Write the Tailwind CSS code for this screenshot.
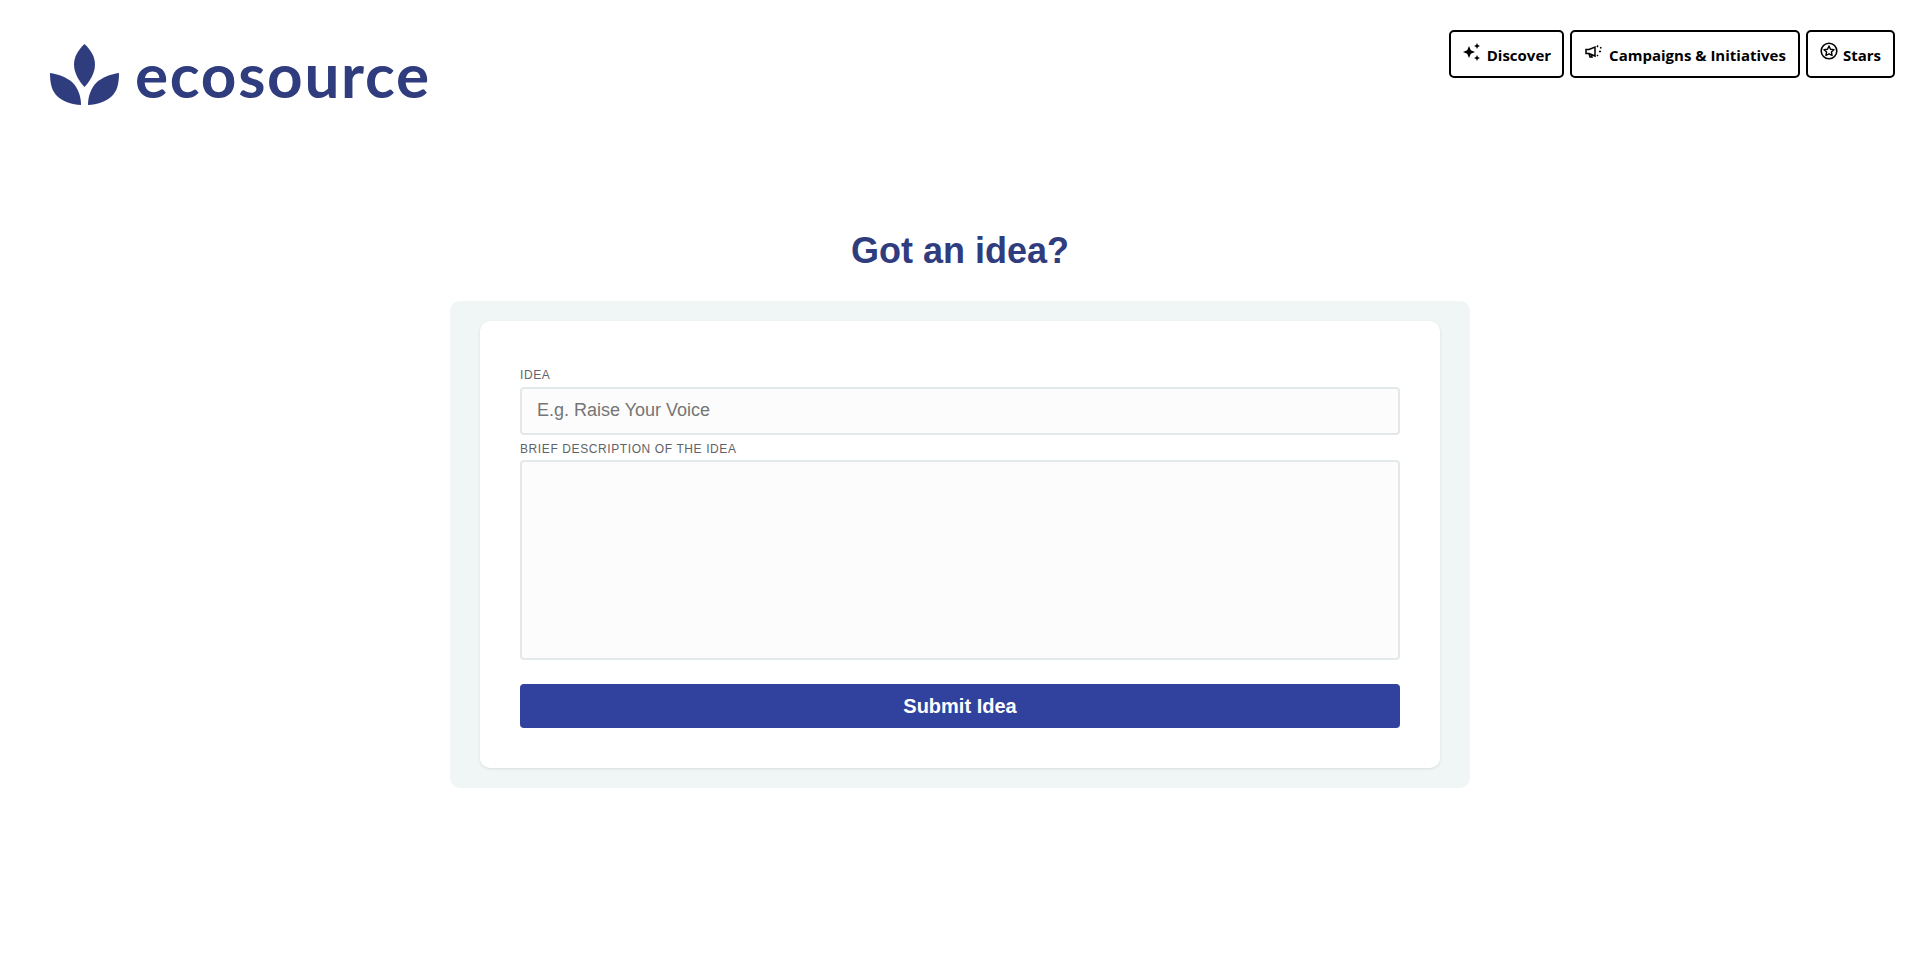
<!DOCTYPE html>
<html lang="en">
<head>
    <meta charset="UTF-8">
    <meta name="viewport" content="width=device-width, initial-scale=1.0">
    <title>Ecosource - Got an idea?</title>
    <script src="https://cdn.jsdelivr.net/npm/@tailwindcss/browser@4"></script>
</head>
<body class="bg-white font-['Liberation_Sans',sans-serif] h-[964px] overflow-hidden">
    <header class="flex justify-between items-start h-[222px]">
        <a href="#" class="flex items-center ml-[50px] mt-[44px] h-[62px] text-[#2f3c7e]">
            <svg width="70" height="62" viewBox="0 0 70 62" class="fill-[#2f3c7e]">
                <path d="M34.500 0C28 6 24 13 24 20.500C24 29 29 37 34.500 43C40 37 45 29 45 20.500C45 13 41 6 34.500 0Z"/>
                <path d="M0 29C0 40 2 47 7 52C13 58 22 60.500 31 61C31 52 28 44 22 38C16 33 8 30 0 29Z"/>
                <path d="M69 29C69 40 67 47 62 52C56 58 47 60.500 38 61C38 52 41 44 47 38C53 33 61 30 69 29Z"/>
            </svg>
            <span class="ml-[15px] font-['Lato',sans-serif] font-bold text-[62px] leading-none tracking-[1.7px] -mt-[2px]">ecosource</span>
        </a>
        <nav class="flex gap-[6px] mt-[30px] mr-[25px] font-['Open_Sans',sans-serif] font-bold text-[15px] text-black">
            <a href="#" class="flex items-center gap-[5px] h-[48px] pt-[2px] px-[11px] border-2 border-black rounded-[5px]">
                <svg width="20" height="20" viewBox="0 0 20 20" class="fill-black -mt-[6px]">
                    <path d="M7 4L8.800 8.200L13 10L8.800 11.800L7 16L5.200 11.800L1 10L5.200 8.200Z"/>
                    <path d="M15 1L15.900 3.100L18 4L15.900 4.900L15 7L14.100 4.900L12 4L14.100 3.100Z"/>
                    <path d="M15 13L15.900 15.100L18 16L15.900 16.900L15 19L14.100 16.900L12 16L14.100 15.100Z"/>
                </svg>
                Discover
            </a>
            <a href="#" class="flex items-center gap-[5px] h-[48px] pt-[2px] px-[12px] border-2 border-black rounded-[5px]">
                <svg width="20" height="20" viewBox="0 0 20 20" fill="none" stroke="black" stroke-width="1.500" class="-mt-[6px]">
                    <path d="M2 7.500V11.500H5L11 14V5L5 7.500Z"/>
                    <path d="M5 11.500L6 15H8L7.200 12.500"/>
                    <path d="M14 3.500L13 5M15 9.500H17M14 14L13 13M16 6L17.500 5.500"/>
                </svg>
                Campaigns &amp; Initiatives
            </a>
            <a href="#" class="flex items-center gap-[5px] h-[48px] pt-[2px] px-[12px] border-2 border-black rounded-[5px]">
                <svg width="18" height="18" viewBox="0 0 18 18" fill="none" stroke="black" class="-mt-[8px]">
                    <circle cx="9" cy="9" r="7.800" stroke-width="1.600"/>
                    <path stroke-width="1.400" stroke-linejoin="round" d="M9 4L10.500 7.300L14 7.700L11.400 10L12.100 13.500L9 11.800L5.900 13.500L6.600 10L4 7.700L7.500 7.300Z"/>
                </svg>
                Stars
            </a>
        </nav>
    </header>

    <main class="flex flex-col items-center">
        <h1 class="text-[36px] leading-[58px] font-bold text-[#2f3c7e] mb-[21px]">Got an idea?</h1>
        <div class="w-[1020px] bg-[#f0f5f5] rounded-[10px] px-[30px] py-[20px]">
            <form class="bg-white rounded-[10px] shadow-[0_1px_3px_rgba(0,0,0,0.1)] px-[40px] pt-[43px] pb-[40px]">
                <label for="idea" class="block text-[12px] leading-[22px] tracking-[0.6px] text-[#5f6369] uppercase mb-[1px]">Idea</label>
                <input id="idea" type="text" placeholder="E.g. Raise Your Voice" class="block w-full h-[48px] pl-[15px] pr-[16px] pb-[2px] bg-[#fcfcfc] border-2 border-[#e3e8ea] rounded-[4px] text-[18px] placeholder:text-[#757575]">
                <label for="description" class="block mt-[3px] text-[12px] leading-[22px] tracking-[0.6px] text-[#5f6369] uppercase">Brief description of the idea</label>
                <textarea id="description" class="block w-full h-[200px] p-[16px] bg-[#fcfcfc] border-2 border-[#e3e8ea] rounded-[4px] resize-none"></textarea>
                <button type="button" class="block w-full h-[44px] mt-[24px] bg-[#31419e] text-white text-[20px] font-bold rounded-[4px]">Submit Idea</button>
            </form>
        </div>
    </main>
</body>
</html>
